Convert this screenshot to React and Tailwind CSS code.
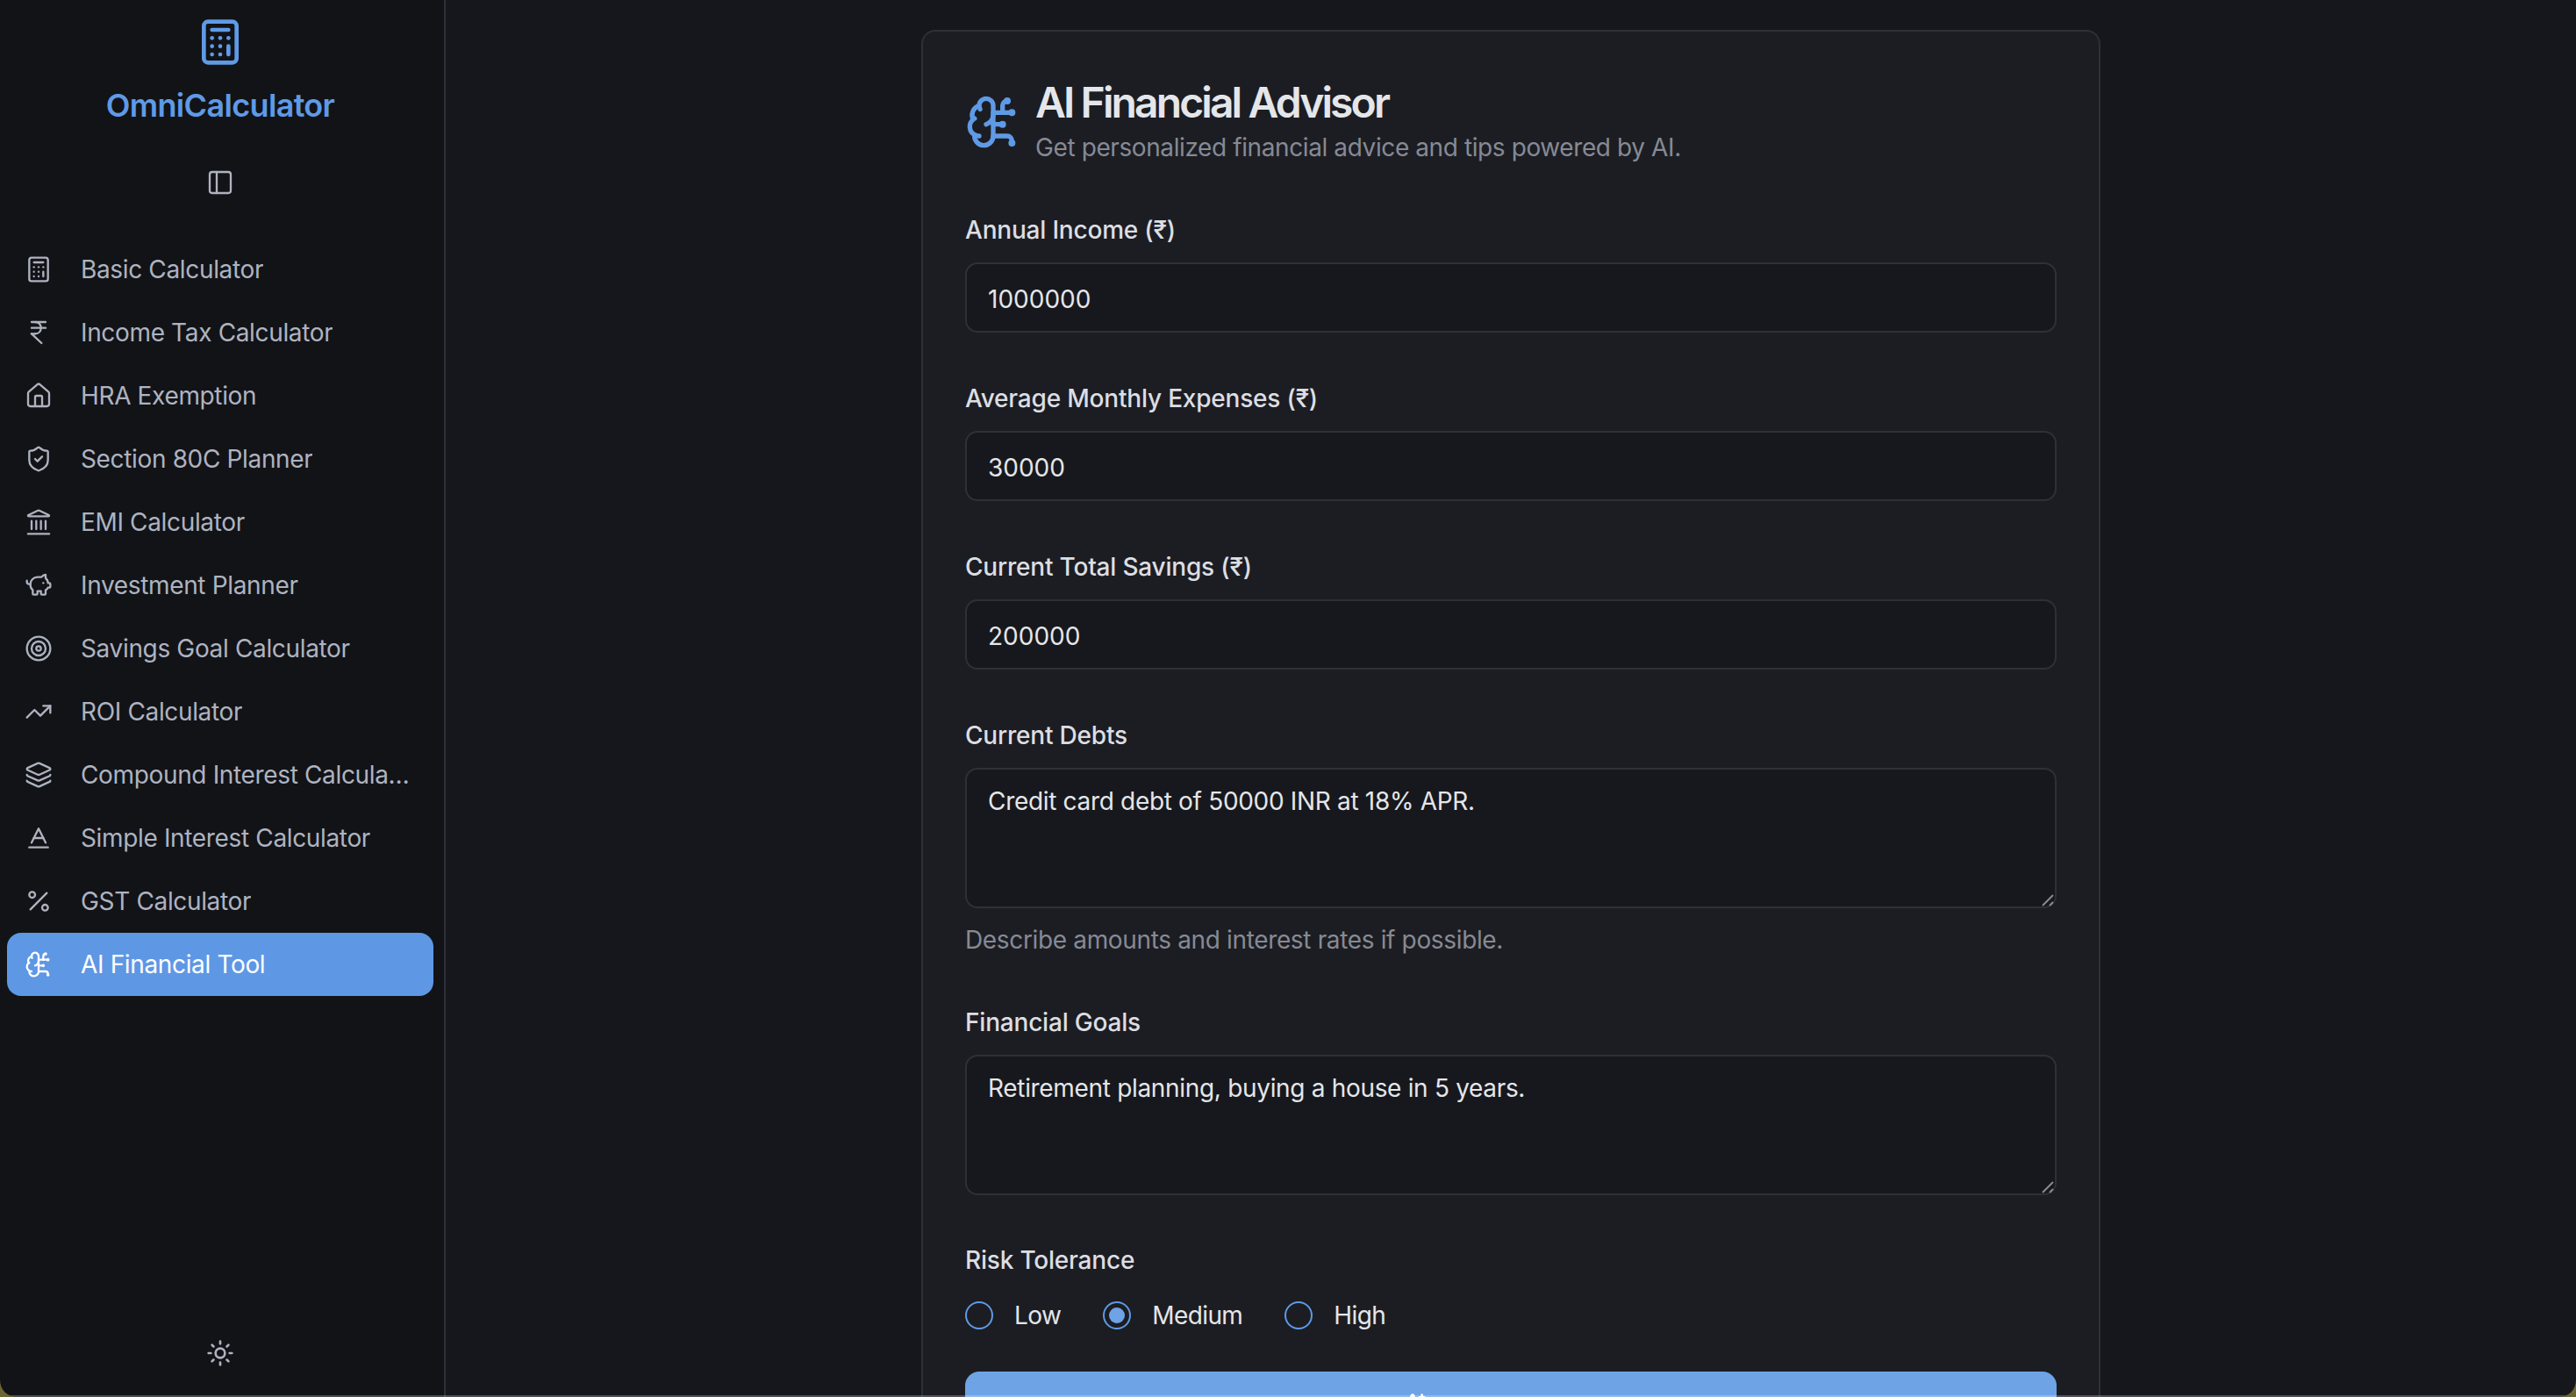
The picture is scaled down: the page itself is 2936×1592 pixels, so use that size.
import React from 'react';
import {
  Calculator, IndianRupee, Home, ShieldCheck, Landmark, PiggyBank, Target, TrendingUp,
  Layers, Baseline, Percent, BrainCircuit, PanelLeft, Sun, Sparkles,
} from 'lucide-react';

const NAV = [
  { label: 'Basic Calculator', icon: Calculator },
  { label: 'Income Tax Calculator', icon: IndianRupee },
  { label: 'HRA Exemption', icon: Home },
  { label: 'Section 80C Planner', icon: ShieldCheck },
  { label: 'EMI Calculator', icon: Landmark },
  { label: 'Investment Planner', icon: PiggyBank },
  { label: 'Savings Goal Calculator', icon: Target },
  { label: 'ROI Calculator', icon: TrendingUp },
  { label: 'Compound Interest Calculator', icon: Layers },
  { label: 'Simple Interest Calculator', icon: Baseline },
  { label: 'GST Calculator', icon: Percent },
  { label: 'AI Financial Tool', icon: BrainCircuit, active: true },
];

function Sidebar() {
  return (
    <aside className="w-[508px] shrink-0 h-full pr-[4px] flex flex-col bg-[#121317] border-r-[2px] border-[#2e3039]">
      {/* Logo */}
      <div className="flex flex-col items-center pt-[20px]">
        <Calculator size={56} className="text-[#5f9ae6]" />
        <h1 className="mt-[22px] text-[36px] leading-[44px] font-semibold tracking-[-0.67px] text-[#5f9ae6]">OmniCalculator</h1>
        <PanelLeft size={32} strokeWidth={1.75} className="mt-[50px] text-[#aeb3c0]" />
      </div>

      {/* Nav */}
      <nav className="mt-[47px] px-[8px] flex flex-col">
        {NAV.map(({ label, icon: Icon, active }) => (
          <a key={label} className={`h-[72px] pl-[20px] pr-[20px] flex items-center gap-[32px] rounded-[16px] text-[28px] tracking-[-0.35px] ${active ? 'bg-[#5e97e4] text-white' : 'text-[#aeb3c0]'}`}>
            <Icon size={32} strokeWidth={1.75} className="shrink-0" />
            <span className="truncate">{label}</span>
          </a>
        ))}
      </nav>

      <div className="mt-auto pb-[34px] flex justify-center">
        <Sun size={32} className="text-[#aeb3c0]" />
      </div>
    </aside>
  );
}

function Field({ label, value, className = 'mt-[55px]' }) {
  return (
    <div className={className}>
      <label className="block text-[28px] leading-[40px] font-medium tracking-[-0.2px] text-[#dcdee3]">{label}</label>
      <input
        type="text"
        defaultValue={value}
        className="mt-[17px] block w-full h-[80px] px-[24px] pt-[3px] rounded-[14px] border-[2px] border-[#2e3039] bg-[#17181d] text-[28px] text-[#e4e6ea] outline-none"
      />
    </div>
  );
}

function AreaField({ label, value, help, className }) {
  return (
    <div className={className}>
      <label className="block text-[28px] leading-[40px] font-medium tracking-[-0.2px] text-[#dcdee3]">{label}</label>
      <div className="relative mt-[17px]">
        <textarea
          defaultValue={value}
          className="block w-full h-[160px] px-[24px] py-[16px] resize-none rounded-[14px] border-[2px] border-[#2e3039] bg-[#17181d] text-[28px] leading-[40px] tracking-[-0.32px] text-[#e4e6ea] outline-none"
        />
        {/* resize grip */}
        <svg className="absolute right-[3px] bottom-[2px]" width="14" height="14" viewBox="0 0 14 14" stroke="#8a8a8a" strokeWidth="2">
          <path d="M1 13L13 1M9 13L13 9" />
        </svg>
      </div>
      {help && <p className="mt-[16px] text-[28px] leading-[40px] tracking-[-0.35px] text-[#868a95]">{help}</p>}
    </div>
  );
}

function Radio({ label, checked }) {
  return (
    <div className="flex items-center gap-[24px]">
      <span className="w-[32px] h-[32px] rounded-full border-[2px] border-[#5f9ae6] flex items-center justify-center">
        {checked && <span className="w-[18px] h-[18px] rounded-full bg-[#6ea3e6]" />}
      </span>
      <span className="text-[28px] leading-[40px] tracking-[-0.6px] text-[#e4e6ea]">{label}</span>
    </div>
  );
}

export default function App() {
  return (
    <div className="relative w-[2936px] h-[1592px] overflow-hidden flex bg-[#16171c] font-['Inter',sans-serif]">
      <Sidebar />

      <main className="flex-1 h-full overflow-hidden flex justify-center pt-[34px]">
        <div className="w-[1344px] h-[1800px] shrink-0 rounded-[16px] border-[2px] border-[#2e3039] bg-[#1c1d22] px-[48px] pt-[53px]">
          {/* Header */}
          <div className="flex items-center gap-[16px]">
            <BrainCircuit size={64} className="shrink-0 text-[#5f9ae6]" />
            <div>
              <h2 className="text-[48px] leading-[56px] font-semibold tracking-[-2.9px] text-[#e4e6ea]">AI Financial Advisor</h2>
              <p className="mt-[3px] text-[28px] leading-[40px] tracking-[-0.4px] text-[#868a95]">Get personalized financial advice and tips powered by AI.</p>
            </div>
          </div>

          <Field label="Annual Income (₹)" value="1000000" className="mt-[54px]" />
          <Field label="Average Monthly Expenses (₹)" value="30000" />
          <Field label="Current Total Savings (₹)" value="200000" />
          <AreaField
            className="mt-[55px]"
            label="Current Debts"
            value="Credit card debt of 50000 INR at 18% APR."
            help="Describe amounts and interest rates if possible."
          />
          <AreaField
            className="mt-[54px]"
            label="Financial Goals"
            value="Retirement planning, buying a house in 5 years."
          />

          {/* Risk tolerance */}
          <div className="mt-[54px]">
            <div className="text-[28px] leading-[40px] font-medium tracking-[-0.2px] text-[#dcdee3]">Risk Tolerance</div>
            <div className="mt-[23px] flex items-center gap-[48px]">
              <Radio label="Low" />
              <Radio label="Medium" checked />
              <Radio label="High" />
            </div>
          </div>

          <button className="mt-[44px] w-full h-[80px] rounded-[16px] bg-[#6ea3e6] flex items-center justify-center gap-[16px] text-[28px] font-medium text-white">
            <Sparkles size={32} />
            <span className="w-[208px] mt-[8px] whitespace-nowrap">Get AI Advice</span>
          </button>
        </div>
      </main>

      {/* window edge and rounded corners */}
      <div className="absolute left-0 right-0 bottom-0 h-[2px] bg-white/25" />
      <svg className="absolute left-0 bottom-0" width="20" height="20" viewBox="0 0 20 20">
        <path d="M0 0C0 12 8 20 20 20H0Z" fill="#6b6635" />
      </svg>
      <svg className="absolute right-0 bottom-0" width="20" height="20" viewBox="0 0 20 20">
        <path d="M20 0C20 12 12 20 0 20H20Z" fill="#6b6635" />
      </svg>
    </div>
  );
}
